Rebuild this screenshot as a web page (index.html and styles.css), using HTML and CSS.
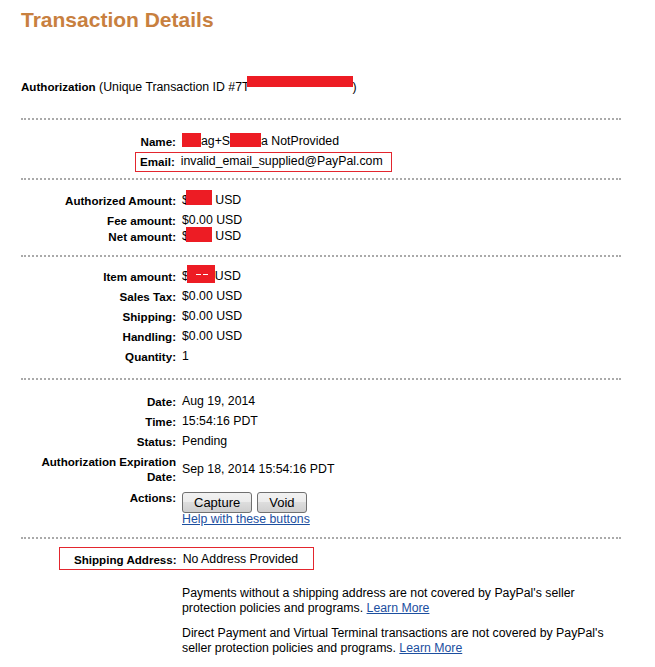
FILE: index.html
```html
<!DOCTYPE html>
<html lang="en">

<head>
  <meta charset="UTF-8">
  <meta name="viewport" content="width=device-width, initial-scale=1.0">
  <title>Transaction Details</title>
  <link rel="stylesheet" href="styles.css">
</head>

<body>
  <h1 class="title">Transaction Details</h1>

  <p class="auth-line"><b>Authorization</b> (Unique Transaction ID #7T<span class="redact redact-id"></span>)</p>

  <div class="group group-buyer">
    <div class="row">
      <span class="label">Name:</span>
      <span class="value"><span class="redact redact-name1"></span>ag+S<span class="redact redact-name2"></span>a NotProvided</span>
    </div>
    <div class="mark mark-email">
      <span class="label">Email:</span>
      <span class="value">invalid_email_supplied@PayPal.com</span>
    </div>
  </div>

  <div class="group group-amounts">
    <div class="row">
      <span class="label">Authorized Amount:</span>
      <span class="value">$<span class="redact redact-amt"></span> USD</span>
    </div>
    <div class="row">
      <span class="label">Fee amount:</span>
      <span class="value">$0.00 USD</span>
    </div>
    <div class="row row-net">
      <span class="label">Net amount:</span>
      <span class="value">$<span class="redact redact-amt redact-net"></span> USD</span>
    </div>
  </div>

  <div class="group group-items">
    <div class="row">
      <span class="label">Item amount:</span>
      <span class="value">$<span class="redact redact-item"></span>USD</span>
    </div>
    <div class="row">
      <span class="label">Sales Tax:</span>
      <span class="value">$0.00 USD</span>
    </div>
    <div class="row">
      <span class="label">Shipping:</span>
      <span class="value">$0.00 USD</span>
    </div>
    <div class="row">
      <span class="label">Handling:</span>
      <span class="value">$0.00 USD</span>
    </div>
    <div class="row">
      <span class="label">Quantity:</span>
      <span class="value">1</span>
    </div>
  </div>

  <div class="group group-status">
    <div class="row">
      <span class="label">Date:</span>
      <span class="value">Aug 19, 2014</span>
    </div>
    <div class="row">
      <span class="label">Time:</span>
      <span class="value">15:54:16 PDT</span>
    </div>
    <div class="row">
      <span class="label">Status:</span>
      <span class="value">Pending</span>
    </div>
    <div class="row">
      <span class="label">Authorization Expiration Date:</span>
      <span class="value">Sep 18, 2014 15:54:16 PDT</span>
    </div>
    <div class="row row-actions">
      <span class="label">Actions:</span>
      <div class="value">
        <div class="buttons">
          <button class="btn">Capture</button>
          <button class="btn">Void</button>
        </div>
        <a href="#" class="help">Help with these buttons</a>
      </div>
    </div>
  </div>

  <div class="group group-shipping">
    <div class="mark mark-ship">
      <span class="label">Shipping Address:</span>
      <span class="value">No Address Provided</span>
    </div>
    <p class="note">Payments without a shipping address are not covered by PayPal's seller protection policies and programs. <a href="#">Learn More</a></p>
    <p class="note">Direct Payment and Virtual Terminal transactions are not covered by PayPal's seller protection policies and programs. <a href="#">Learn More</a></p>
  </div>
</body>

</html>
```

FILE: styles.css
```css
body {
  font-family: "Liberation Sans", Arial, sans-serif;
  font-size: 12.3px;
  color: #000;
  background: #fff;
  margin: 0;
  padding: 0 0 0 21px;
}

a {
  color: #1c4f9f;
}

.title {
  font-size: 21px;
  line-height: 25px;
  color: #c8803f;
  margin: 7px 0 0;
}

.auth-line {
  line-height: 15px;
  margin: 47px 0 23px;
}

.auth-line b {
  font-size: 11.6px;
}

.group {
  width: 600px;
  border-top: 2px dotted #aaa;
}

.group-buyer { padding: 11px 0 6px; }
.group-amounts { padding: 10px 0 9px; }
.group-items { padding: 9px 0 12px; }
.group-status { padding: 11px 0 8px; }
.group-shipping { padding: 8px 0 20px; }

.row {
  display: grid;
  grid-template-columns: 155px 1fr;
  column-gap: 6px;
  align-items: center;
  padding: 3px 0 2px;
  line-height: 15px;
}

.label {
  font-weight: bold;
  font-size: 11.6px;
  text-align: right;
}

.row-net {
  margin-top: -4px;
}

.row-actions {
  align-items: start;
  padding-top: 4px;
}

/* red boxes drawn round a row */
.mark {
  display: flex;
  column-gap: 6px;
  width: max-content;
  line-height: 15px;
  border: 1px solid #e3262e;
}

.mark-email {
  margin: 1px 0 0 114px;
  padding: 1px 8px 2px 4px;
}

.mark-ship {
  margin-left: 38px;
  padding: 4px 15px 2px 14px;
}

/* blacked out values: the negative top margin keeps them out of the line height */
.redact {
  display: inline-block;
  background: #ed1c24;
}

.redact-id {
  width: 106px;
  height: 11px;
  margin: -11px 0 0 -3px;
  vertical-align: 4px;
}

.redact-name1,
.redact-name2 {
  height: 14px;
  margin-top: -14px;
  vertical-align: -2px;
}

.redact-name1 { width: 19px; }
.redact-name2 { width: 31px; }

.redact-amt {
  width: 26px;
  height: 15px;
  margin: -15px 0 0 -3px;
  vertical-align: -1px;
}

.redact-net {
  vertical-align: -2px;
}

.redact-item {
  width: 28px;
  height: 18px;
  margin: -18px 0 0 -2px;
  vertical-align: -3px;
  background:
    linear-gradient(#fff, #fff) 9px 9px / 5px 1px no-repeat,
    linear-gradient(#fff, #fff) 16px 9px / 5px 1px no-repeat,
    #ed1c24;
}

.buttons {
  display: flex;
  gap: 5px;
  margin-top: 2px;
}

.btn {
  font-family: "Liberation Sans", Arial, sans-serif;
  font-size: 13px;
  color: #000;
  height: 21px;
  padding: 0 11px;
  border: 1px solid #707070;
  border-radius: 3px;
  background: linear-gradient(#f2f2f2 0%, #ebebeb 50%, #dddddd 50%, #cfcfcf 100%);
}

.help {
  display: block;
  margin-top: -1px;
  line-height: 15px;
}

.note {
  width: 438px;
  margin: 16px 0 0 161px;
  line-height: 15px;
}

.note + .note {
  margin-top: 10px;
}
```
